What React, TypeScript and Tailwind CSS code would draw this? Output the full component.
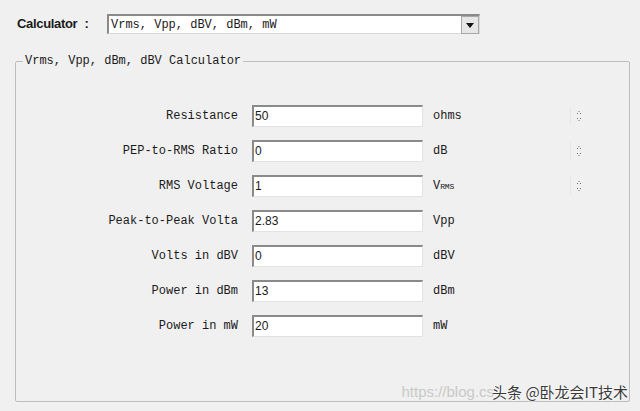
import React from "react";

const mono = { fontFamily: '"Liberation Mono", "DejaVu Sans Mono", monospace' };

function Spinner() {
  return (
    <svg width="10" height="14" viewBox="0 0 10 14" className="text-[#6f6f6f]">
      <g fill="currentColor">
        <rect x="4.5" y="2" width="1" height="1" />
        <rect x="3" y="4" width="1" height="1" />
        <rect x="6" y="4" width="1" height="1" />
        <rect x="3" y="9" width="1" height="1" />
        <rect x="6" y="9" width="1" height="1" />
        <rect x="4.5" y="11" width="1" height="1" />
      </g>
    </svg>
  );
}

type Row = { label: string; value: string; unit: React.ReactNode; spin?: boolean };

const rows: Row[] = [
  { label: "Resistance", value: "50", unit: "ohms", spin: true },
  { label: "PEP-to-RMS Ratio", value: "0", unit: "dB", spin: true },
  {
    label: "RMS Voltage",
    value: "1",
    unit: (
      <>
        V<span className="text-[8px] tracking-tight">RMS</span>
      </>
    ),
    spin: true,
  },
  { label: "Peak-to-Peak Volta", value: "2.83", unit: "Vpp" },
  { label: "Volts in dBV", value: "0", unit: "dBV" },
  { label: "Power in dBm", value: "13", unit: "dBm" },
  { label: "Power in mW", value: "20", unit: "mW" },
];

export default function App() {
  return (
    <div className="relative w-[640px] h-[411px] bg-[#f0f0f0] overflow-hidden text-[#1a1a1a]">
      {/* Top selector */}
      <div className="flex items-center pt-[14px] pl-[17px]">
        <span
          className="w-[90px] text-[13px] font-bold tracking-tight"
          style={{ fontFamily: '"Liberation Sans", Arial, sans-serif' }}
        >
          Calculator <span className="ml-[4px]">:</span>
        </span>
        <div className="flex h-[20px] w-[373px] bg-white border-t-2 border-l-2 border-t-[#8a8a8a] border-l-[#8a8a8a] border-b border-r border-b-[#d8d8d8] border-r-[#d8d8d8]">
          <div className="flex-1 pl-[2px] text-[12px] leading-[18px]" style={mono}>
            Vrms, Vpp, dBV, dBm, mW
          </div>
          <div className="flex items-center justify-center w-[18px] h-[18px] bg-[#e6e6e6] border border-[#a8a8a8]">
            <svg width="8" height="5" viewBox="0 0 8 5">
              <path d="M0 0h8L4 5z" fill="#111" />
            </svg>
          </div>
        </div>
      </div>

      {/* Group box */}
      <fieldset className="ml-[15px] mt-[19px] w-[615px] h-[349px] border border-[#bdbdbd] rounded-[2px]">
        <legend className="ml-[7px] px-[2px] text-[12px] leading-[16px]" style={mono}>
          Vrms, Vpp, dBm, dBV Calculator
        </legend>
        <div className="flex flex-col gap-[13px] pt-[36px]">
          {rows.map((r) => (
            <div key={r.label} className="flex items-center h-[22px]">
              <div className="w-[222px] text-right text-[12px]" style={mono}>
                {r.label}
              </div>
              <div
                className="ml-[14px] w-[171px] h-[22px] bg-white border-t-2 border-l-2 border-t-[#8a8a8a] border-l-[#8a8a8a] border-b border-r border-b-[#e2e2e2] border-r-[#e2e2e2] pl-[1px] text-[12px] leading-[19px]"
                style={{ fontFamily: '"Liberation Sans", Arial, sans-serif' }}
              >
                {r.value}
              </div>
              <div className="ml-[10px] w-[137px] text-[12px]" style={mono}>
                {r.unit}
              </div>
              {r.spin && (
                <div className="flex items-center pl-[3px] border-l border-[#e6e6e6] h-[18px]">
                  <Spinner />
                </div>
              )}
            </div>
          ))}
        </div>
      </fieldset>

      {/* Watermark */}
      <div className="absolute right-[12px] bottom-[10px] flex items-end text-[15px] leading-[18px]">
        <span
          className="text-[#c9c9c9] mr-[-2px]"
          style={{ fontFamily: '"Liberation Sans", Arial, sans-serif' }}
        >
          https://blog.cs
        </span>
        <span
          className="text-[#3a3a3a]"
          style={{
            fontFamily: '"Noto Sans CJK SC", sans-serif',
            textShadow: "0 0 2px #fff, 0 0 2px #fff",
          }}
        >
          头条 @卧龙会IT技术
        </span>
      </div>
    </div>
  );
}
